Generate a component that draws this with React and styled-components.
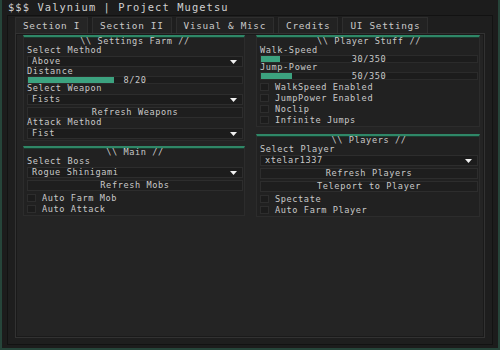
import React from 'react';
import styled, { createGlobalStyle } from 'styled-components';

const GlobalStyle = createGlobalStyle`
  html, body {
    margin: 0;
    padding: 0;
    background: #1c1c1c;
  }
  body {
    font-family: "DejaVu Sans Mono", "Liberation Mono", monospace;
    color: #c9c9c9;
  }
`;

const Window = styled.div`
  width: 500px;
  height: 350px;
  box-sizing: border-box;
  background: #1c1c1c;
  border: 2px solid #26453a;
  border-top: none;
  display: flex;
  flex-direction: column;
`;

const TitleBar = styled.div`
  height: 15px;
  line-height: 15px;
  padding-left: 6px;
  font-size: 10.4px;
  letter-spacing: 1.1px;
  color: #d0d0d0;
  white-space: nowrap;
`;

const Frame = styled.div`
  flex: 1;
  margin: 0 5px 3px 5px;
  background: #1e1e1e;
  border: 1px solid #121212;
  padding: 1px 7px 6px 7px;
  display: flex;
  flex-direction: column;
`;

const TabRow = styled.div`
  height: 16px;
  display: flex;
  align-items: flex-end;
  gap: 4px;
`;

const Tab = styled.div`
  height: 15px;
  line-height: 15px;
  padding: 0 7px;
  font-size: 9.4px;
  letter-spacing: 0.7px;
  color: #c9c9c9;
  background: ${p => (p.$active ? '#252525' : '#222222')};
  border: 1px solid #2e2e2e;
  border-bottom: none;
  white-space: nowrap;
`;

const Page = styled.div`
  flex: 1;
  background: #242424;
  border: 1px solid #323232;
  box-shadow: inset 0 0 0 1px #1a1a1a;
  padding: 1px 4px 0 7px;
`;

const Columns = styled.div`
  display: grid;
  grid-template-columns: 222px 224px;
  column-gap: 11px;
  align-items: start;
`;

const Column = styled.div`
  display: flex;
  flex-direction: column;
  gap: ${p => p.$gap || '5px'};
`;

const Section = styled.div`
  background: #212121;
  border: 1px solid #2c2c2c;
  border-top: 2px solid #2f8767;
  box-shadow: inset 0 1px 0 #1a3d30;
  padding: 0 1px 1px 3px;
  display: flex;
  flex-direction: column;
  font-size: 8.6px;
  letter-spacing: 0.6px;
`;

const SectionTitle = styled.div`
  text-align: center;
  line-height: 9px;
  height: 9px;
  white-space: nowrap;
`;

const Label = styled.div`
  line-height: 9px;
  height: 9px;
  white-space: nowrap;
`;

const Dropdown = styled.div`
  height: 11px;
  margin-top: 1px;
  box-sizing: border-box;
  background: #1c1c1c;
  border: 1px solid #2d2d2d;
  display: flex;
  align-items: center;
  justify-content: space-between;
  padding: 0 5px 0 4px;
  line-height: 9px;
  white-space: nowrap;
`;

const Button = styled.div`
  height: 11px;
  margin-top: 2px;
  box-sizing: border-box;
  background: #1e1e1e;
  border: 1px solid #2d2d2d;
  text-align: center;
  line-height: 9px;
  white-space: nowrap;
`;

const SliderTrack = styled.div`
  height: 8px;
  box-sizing: border-box;
  background: #1c1c1c;
  border: 1px solid #2b2b2b;
  display: grid;
`;

const SliderFill = styled.div`
  grid-area: 1 / 1;
  height: 100%;
  background: #3ca27f;
`;

const SliderText = styled.div`
  grid-area: 1 / 1;
  text-align: center;
  line-height: 6px;
  white-space: nowrap;
`;

const CheckRow = styled.div`
  height: 11px;
  display: flex;
  align-items: center;
  gap: 6px;
  white-space: nowrap;
  margin-top: ${p => (p.$first ? '1px' : '0')};
`;

const CheckBox = styled.div`
  width: 9px;
  height: 8px;
  box-sizing: border-box;
  background: #1c1c1c;
  border: 1px solid #2d2d2d;
`;

const Arrow = () => (
  <svg width="7" height="4" viewBox="0 0 7 4">
    <path d="M0 0 H7 L3.5 4 Z" fill="#f0f0f0" />
  </svg>
);

function Select({ value }) {
  return (
    <Dropdown>
      <span>{value}</span>
      <Arrow />
    </Dropdown>
  );
}

function Slider({ value, max }) {
  return (
    <SliderTrack>
      <SliderFill style={{ width: `${(value / max) * 100}%` }} />
      <SliderText>{value}/{max}</SliderText>
    </SliderTrack>
  );
}

function Toggle({ label, first }) {
  return (
    <CheckRow $first={first}>
      <CheckBox />
      <span>{label}</span>
    </CheckRow>
  );
}

const tabs = ['Section I', 'Section II', 'Visual & Misc', 'Credits', 'UI Settings'];

export default function App() {
  return (
    <>
      <GlobalStyle />
      <Window>
        <TitleBar>$$$ Valynium | Project Mugetsu</TitleBar>
        <Frame>
          <TabRow>
            {tabs.map((t, i) => (
              <Tab key={t} $active={i === 0}>{t}</Tab>
            ))}
          </TabRow>
          <Page>
            <Columns>
              <Column>
                <Section>
                  <SectionTitle>\\ Settings Farm //</SectionTitle>
                  <Label>Select Method</Label>
                  <Select value="Above" />
                  <Label>Distance</Label>
                  <Slider value={8} max={20} />
                  <Label>Select Weapon</Label>
                  <Select value="Fists" />
                  <Button>Refresh Weapons</Button>
                  <Label>Attack Method</Label>
                  <Select value="Fist" />
                </Section>
                <Section>
                  <SectionTitle>\\ Main //</SectionTitle>
                  <Label>Select Boss</Label>
                  <Select value="Rogue Shinigami" />
                  <Button>Refresh Mobs</Button>
                  <Toggle label="Auto Farm Mob" first />
                  <Toggle label="Auto Attack" />
                </Section>
              </Column>
              <Column $gap="7px">
                <Section>
                  <SectionTitle>\\ Player Stuff //</SectionTitle>
                  <Label>Walk-Speed</Label>
                  <Slider value={30} max={350} />
                  <Label>Jump-Power</Label>
                  <Slider value={50} max={350} />
                  <Toggle label="WalkSpeed Enabled" first />
                  <Toggle label="JumpPower Enabled" />
                  <Toggle label="Noclip" />
                  <Toggle label="Infinite Jumps" />
                </Section>
                <Section>
                  <SectionTitle>\\ Players //</SectionTitle>
                  <Label>Select Player</Label>
                  <Select value="xtelar1337" />
                  <Button>Refresh Players</Button>
                  <Button>Teleport to Player</Button>
                  <Toggle label="Spectate" first />
                  <Toggle label="Auto Farm Player" />
                </Section>
              </Column>
            </Columns>
          </Page>
        </Frame>
      </Window>
    </>
  );
}
